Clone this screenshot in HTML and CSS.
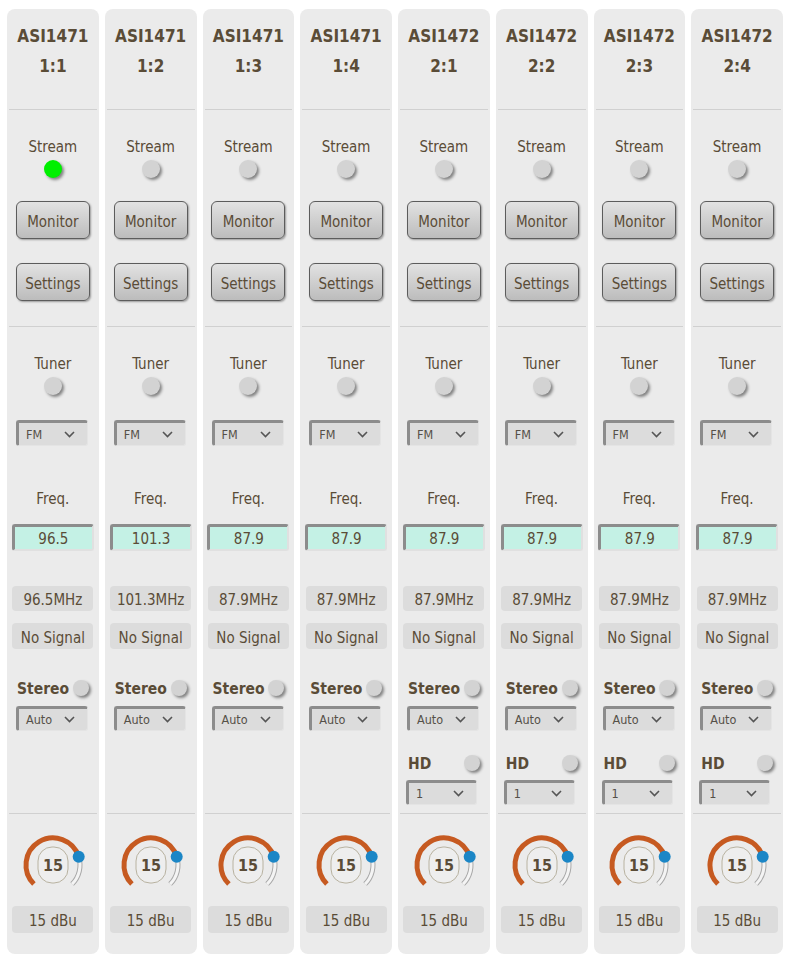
FILE: index.html
```html
<!DOCTYPE html>
<html>
<head>
<meta charset="utf-8">
<link rel="stylesheet" href="styles.css">
</head>
<body>
<div class="rack" id="rack"></div>
<script src="app.js"></script>
</body>
</html>
```
FILE: app.js
```js
const chans = [
  ["ASI1471","1:1","96.5",true,false],
  ["ASI1471","1:2","101.3",false,false],
  ["ASI1471","1:3","87.9",false,false],
  ["ASI1471","1:4","87.9",false,false],
  ["ASI1472","2:1","87.9",false,true],
  ["ASI1472","2:2","87.9",false,true],
  ["ASI1472","2:3","87.9",false,true],
  ["ASI1472","2:4","87.9",false,true]
];
const chev = '<svg class="chev" width="11" height="7" viewBox="0 0 11 7"><polyline points="1,1 5.5,5.5 10,1" fill="none" stroke="#555" stroke-width="1.6"/></svg>';
const knob = '<svg class="knob" width="70" height="70" viewBox="0 0 70 70">' +
  '<path d="M54.09 54.09 A27 27 0 0 0 60.68 26.66" fill="none" stroke="#a8a8a8" stroke-width="5"/>' +
  '<path d="M54.09 54.09 A27 27 0 0 0 60.68 26.66" fill="none" stroke="#f4f4f4" stroke-width="3"/>' +
  '<path d="M15.91 54.09 A27 27 0 1 1 60.68 26.66" fill="none" stroke="#c65a21" stroke-width="5"/>' +
  '<rect x="20" y="17" width="30" height="36" rx="14" fill="#eeeeee" stroke="#b8b2a0" stroke-width="1"/>' +
  '<text x="35" y="41" text-anchor="middle" class="kv">15</text>' +
  '<circle cx="60.68" cy="26.66" r="6" fill="#1b86c6"/></svg>';
let html = "";
for (const [m, n, f, on, hd] of chans) {
  html += '<div class="col">' +
    '<div class="head"><div>' + m + '</div><div>' + n + '</div></div>' +
    '<div class="sep"></div>' +
    '<div class="sec2">' +
      '<div class="lbl lbl-stream">Stream</div>' +
      '<div class="led' + (on ? ' led-on' : '') + '"></div>' +
      '<div class="btn btn-mon">Monitor</div>' +
      '<div class="btn btn-set">Settings</div>' +
    '</div>' +
    '<div class="sep"></div>' +
    '<div class="sec3">' +
      '<div class="lbl lbl-tuner">Tuner</div>' +
      '<div class="led"></div>' +
      '<div class="sel sel-band"><span>FM</span>' + chev + '</div>' +
      '<div class="lbl lbl-freq">Freq.</div>' +
      '<div class="freq">' + f + '</div>' +
      '<div class="info info-mhz">' + f + 'MHz</div>' +
      '<div class="info info-sig">No Signal</div>' +
      '<div class="row row-stereo"><span>Stereo</span><div class="led led-sm"></div></div>' +
      '<div class="sel sel-row"><span>Auto</span>' + chev + '</div>' +
      (hd ? '<div class="row row-hd"><span>HD</span><div class="led led-sm"></div></div>' +
            '<div class="sel sel-row sel-hd"><span>1</span>' + chev + '</div>' : '') +
    '</div>' +
    '<div class="sep"></div>' +
    '<div class="sec4">' + knob +
      '<div class="info info-dbu">15 dBu</div>' +
    '</div>' +
  '</div>';
}
document.getElementById("rack").innerHTML = html;
```
FILE: styles.css
```css
html, body { margin: 0; padding: 0; background: #ffffff; }
body {
  font-family: "DejaVu Sans Condensed", "DejaVu Sans", sans-serif;
  color: #5a4c37;
  padding: 9px 7px 0 7px;
}
.rack {
  display: grid;
  grid-template-columns: repeat(8, 1fr);
  gap: 6px;
  width: 776px;
}
.col {
  background: #ebebeb;
  border-radius: 8px;
  height: 945px;
  display: flex;
  flex-direction: column;
  align-items: center;
}
.head {
  height: 88px;
  padding-top: 12px;
  font-weight: bold;
  font-size: 17px;
  line-height: 30px;
  text-align: center;
  box-sizing: content-box;
}
.sep {
  align-self: stretch;
  margin: 0 2px;
  height: 1px;
  background: #d0d0d0;
  flex: none;
}
.sec2, .sec3, .sec4 {
  align-self: stretch;
  display: flex;
  flex-direction: column;
  align-items: center;
}
.sec2 { height: 216px; }
.sec3 { height: 486px; }
.sec4 { flex: 1; }
.lbl { font-size: 15px; line-height: 20px; height: 20px; }
.lbl-stream, .lbl-tuner { margin-top: 27px; }
.lbl-freq { margin-top: 43px; }
.led {
  width: 18px; height: 18px; border-radius: 50%;
  background: #d3d3d3;
  box-shadow: 2px 2px 3px rgba(0,0,0,0.45);
  margin-top: 3px;
  flex: none;
}
.led-on { background: #00f000; }
.led-sm { width: 16px; height: 16px; margin-top: 0; }
.btn {
  box-sizing: border-box;
  width: 74px; height: 38px;
  border: 1px solid #5c5c5c;
  border-radius: 6px;
  background: linear-gradient(#e2e2e2, #bcbcbc);
  box-shadow: 1px 1px 2px rgba(0,0,0,0.35);
  font-size: 15px;
  padding-top: 3px;
  display: flex; align-items: center; justify-content: center;
}
.btn-mon { margin-top: 23px; }
.btn-set { margin-top: 24px; }
.sel {
  box-sizing: border-box;
  width: 72px; height: 26px;
  background: #dcdcdc;
  border-top: 3px solid #8c8c8c;
  border-left: 3px solid #8c8c8c;
  border-right: 1px solid #e4e4e4;
  border-bottom: 1px solid #e4e4e4;
  border-radius: 3px;
  display: flex; align-items: center; justify-content: space-between;
  padding: 0 12px 0 7px;
  font-size: 12.5px;
  color: #555048;
  align-self: flex-start;
  margin-left: 9px;
}
.sel-band { margin-top: 25px; }
.sel-row { height: 25px; margin-top: 8px; }
.sel-hd { margin-top: 7px; margin-left: 8px; width: 71px; }
.chev { display: block; }
.freq {
  box-sizing: border-box;
  width: 82px; height: 27px;
  margin-top: 15px;
  background: #c4f1e5;
  border-top: 3px solid #8c8c8c;
  border-left: 3px solid #8c8c8c;
  border-right: 2px solid #e0e0e0;
  border-bottom: 2px solid #e0e0e0;
  border-radius: 3px;
  font-size: 15px;
  padding-top: 1px;
  display: flex; align-items: center; justify-content: center;
}
.info {
  box-sizing: border-box;
  width: 81px; height: 26px;
  background: #dcdcdc;
  border-radius: 4px;
  font-size: 15px;
  padding-top: 3px;
  display: flex; align-items: center; justify-content: center;
}
.info-mhz { margin-top: 35px; height: 25px; }
.info-sig { margin-top: 12px; }
.row {
  align-self: stretch;
  height: 20px;
  display: flex; align-items: center; justify-content: space-between;
  padding: 0 10px 0 10px;
  font-weight: bold;
  font-size: 15.5px;
}
.row span { padding-top: 2px; }
.row-stereo { margin-top: 29px; }
.row-hd { margin-top: 22px; }
.knob { display: block; margin-top: 16px; }
.kv { font-family: "DejaVu Sans Condensed", "DejaVu Sans", sans-serif; font-weight: bold; font-size: 16px; fill: #5a4c37; }
.info-dbu { margin-top: 6px; height: 27px; }
```
